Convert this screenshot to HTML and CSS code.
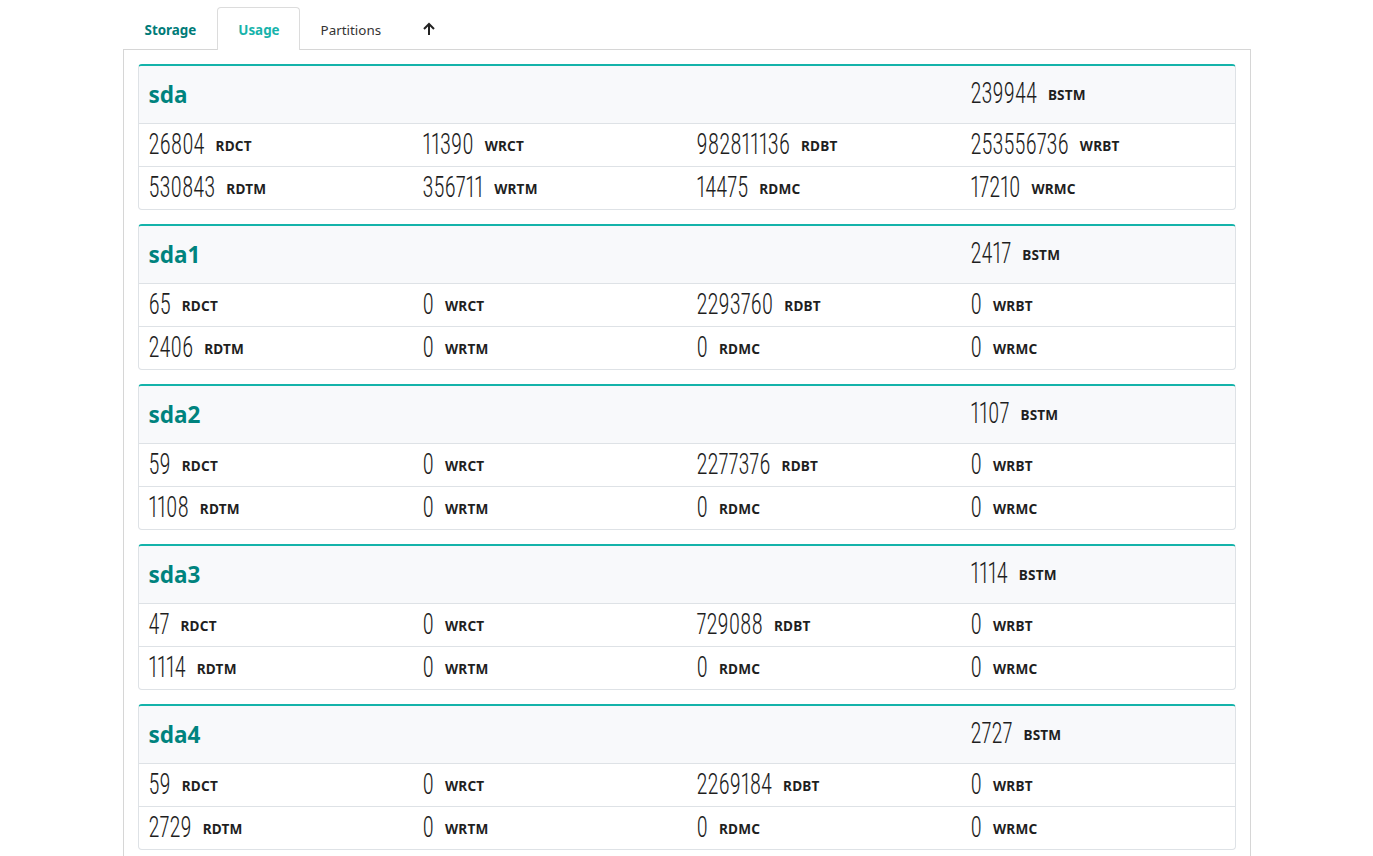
FILE: index.html
```html
<!DOCTYPE html>
<html>
<head>
<meta charset="utf-8">
<link rel="stylesheet" href="styles.css">
</head>
<body>
<div class="wrap">
  <ul class="tabs">
    <li class="tab tab-storage">Storage</li>
    <li class="tab tab-active">Usage</li>
    <li class="tab">Partitions</li>
    <li class="tab tab-icon"><svg width="14" height="14" viewBox="0 0 14 14"><path d="M7 13V2M2 7l5-5 5 5" fill="none" stroke="#222" stroke-width="2"/></svg></li>
  </ul>
  <div class="panel">
    <div class="card">
      <div class="card-head">
        <div class="title">sda</div>
        <div class="cell"><span class="num">239944</span><span class="lbl">BSTM</span></div>
      </div>
      <div class="row">
        <div class="cell"><span class="num">26804</span><span class="lbl">RDCT</span></div>
        <div class="cell"><span class="num">11390</span><span class="lbl">WRCT</span></div>
        <div class="cell"><span class="num">982811136</span><span class="lbl">RDBT</span></div>
        <div class="cell"><span class="num">253556736</span><span class="lbl">WRBT</span></div>
      </div>
      <div class="row">
        <div class="cell"><span class="num">530843</span><span class="lbl">RDTM</span></div>
        <div class="cell"><span class="num">356711</span><span class="lbl">WRTM</span></div>
        <div class="cell"><span class="num">14475</span><span class="lbl">RDMC</span></div>
        <div class="cell"><span class="num">17210</span><span class="lbl">WRMC</span></div>
      </div>
    </div>
    <div class="card">
      <div class="card-head">
        <div class="title">sda1</div>
        <div class="cell"><span class="num">2417</span><span class="lbl">BSTM</span></div>
      </div>
      <div class="row">
        <div class="cell"><span class="num">65</span><span class="lbl">RDCT</span></div>
        <div class="cell"><span class="num">0</span><span class="lbl">WRCT</span></div>
        <div class="cell"><span class="num">2293760</span><span class="lbl">RDBT</span></div>
        <div class="cell"><span class="num">0</span><span class="lbl">WRBT</span></div>
      </div>
      <div class="row">
        <div class="cell"><span class="num">2406</span><span class="lbl">RDTM</span></div>
        <div class="cell"><span class="num">0</span><span class="lbl">WRTM</span></div>
        <div class="cell"><span class="num">0</span><span class="lbl">RDMC</span></div>
        <div class="cell"><span class="num">0</span><span class="lbl">WRMC</span></div>
      </div>
    </div>
    <div class="card">
      <div class="card-head">
        <div class="title">sda2</div>
        <div class="cell"><span class="num">1107</span><span class="lbl">BSTM</span></div>
      </div>
      <div class="row">
        <div class="cell"><span class="num">59</span><span class="lbl">RDCT</span></div>
        <div class="cell"><span class="num">0</span><span class="lbl">WRCT</span></div>
        <div class="cell"><span class="num">2277376</span><span class="lbl">RDBT</span></div>
        <div class="cell"><span class="num">0</span><span class="lbl">WRBT</span></div>
      </div>
      <div class="row">
        <div class="cell"><span class="num">1108</span><span class="lbl">RDTM</span></div>
        <div class="cell"><span class="num">0</span><span class="lbl">WRTM</span></div>
        <div class="cell"><span class="num">0</span><span class="lbl">RDMC</span></div>
        <div class="cell"><span class="num">0</span><span class="lbl">WRMC</span></div>
      </div>
    </div>
    <div class="card">
      <div class="card-head">
        <div class="title">sda3</div>
        <div class="cell"><span class="num">1114</span><span class="lbl">BSTM</span></div>
      </div>
      <div class="row">
        <div class="cell"><span class="num">47</span><span class="lbl">RDCT</span></div>
        <div class="cell"><span class="num">0</span><span class="lbl">WRCT</span></div>
        <div class="cell"><span class="num">729088</span><span class="lbl">RDBT</span></div>
        <div class="cell"><span class="num">0</span><span class="lbl">WRBT</span></div>
      </div>
      <div class="row">
        <div class="cell"><span class="num">1114</span><span class="lbl">RDTM</span></div>
        <div class="cell"><span class="num">0</span><span class="lbl">WRTM</span></div>
        <div class="cell"><span class="num">0</span><span class="lbl">RDMC</span></div>
        <div class="cell"><span class="num">0</span><span class="lbl">WRMC</span></div>
      </div>
    </div>
    <div class="card">
      <div class="card-head">
        <div class="title">sda4</div>
        <div class="cell"><span class="num">2727</span><span class="lbl">BSTM</span></div>
      </div>
      <div class="row">
        <div class="cell"><span class="num">59</span><span class="lbl">RDCT</span></div>
        <div class="cell"><span class="num">0</span><span class="lbl">WRCT</span></div>
        <div class="cell"><span class="num">2269184</span><span class="lbl">RDBT</span></div>
        <div class="cell"><span class="num">0</span><span class="lbl">WRBT</span></div>
      </div>
      <div class="row">
        <div class="cell"><span class="num">2729</span><span class="lbl">RDTM</span></div>
        <div class="cell"><span class="num">0</span><span class="lbl">WRTM</span></div>
        <div class="cell"><span class="num">0</span><span class="lbl">RDMC</span></div>
        <div class="cell"><span class="num">0</span><span class="lbl">WRMC</span></div>
      </div>
    </div>
  </div>
</div>
</body>
</html>
```
FILE: styles.css
```css
html, body { margin: 0; padding: 0; background: #fff; }
body {
  font-family: "Noto Sans", "Open Sans", sans-serif;
  color: #222;
  padding-top: 7px;
}
.wrap { width: 1128px; margin: 0 auto; }
.tabs {
  list-style: none; margin: 0 0 -1px 0; padding: 0 0 0 1px;
  display: flex; position: relative; z-index: 1;
  height: 43px;
}
.tab {
  height: 43px; box-sizing: border-box;
  padding: 2px 20px 0; display: flex; align-items: center;
  font-size: 13.4px; color: #333;
  border: 1px solid transparent; border-bottom: none;
  border-radius: 4px 4px 0 0;
}
.tab-storage { color: #007b78; font-weight: 700; }
.tab-active { color: #17b3ab; font-weight: 700; background: #fff; border-color: #dcdcdc; padding: 2px 19px 0 20px; }
.tab-icon { padding: 0 21px 0 19px; }
.panel {
  border: 1px solid #d6d6d6;
  border-bottom: none;
  padding: 14px 14px 0 14px;
  display: flex; flex-direction: column; gap: 14px;
  min-height: 820px;
}
.card {
  border: 1px solid #dee2e6;
  border-top: 2px solid #14b3aa;
  border-radius: 4px;
  overflow: hidden;
}
.card-head {
  display: grid; grid-template-columns: 3fr 1fr;
  background: #f8f9fb;
  height: 57px; align-items: center;
  border-bottom: 1px solid #dee2e6;
}
.title {
  padding-left: 10px;
  font-size: 22.5px; font-weight: 700; color: #00837e;
}
.row {
  display: grid; grid-template-columns: repeat(4, 1fr);
  height: 42px; align-items: center;
}
.row + .row { border-top: 1px solid #dee2e6; }
.cell { padding-left: 10px; display: flex; align-items: center; }
.num {
  display: inline-block;
  font-family: "Roboto Condensed", "Liberation Sans Narrow", Roboto, sans-serif;
  font-stretch: 62.5%;
  font-weight: 300;
  font-size: 22.6px;
  font-variant-numeric: proportional-nums;
  transform: scaleY(1.33);
  color: #1e1e1e;
  line-height: 1;
}
.lbl {
  margin-left: 11px;
  font-size: 13.6px; font-weight: 700; color: #1f1f1f;
  letter-spacing: 0.2px;
}
```
